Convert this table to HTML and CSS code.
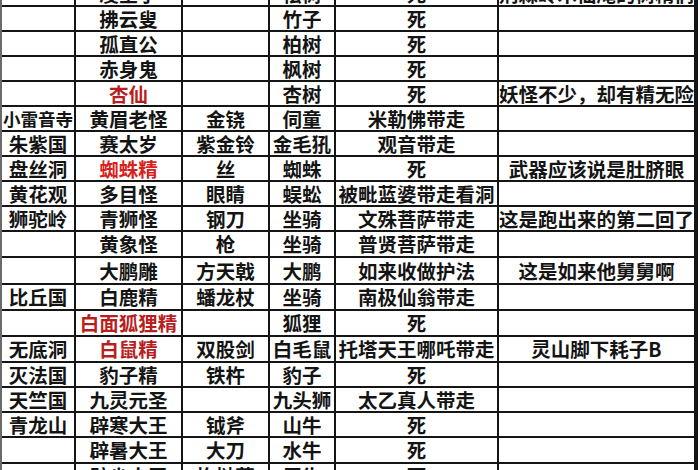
FILE: index.html
```html
<!DOCTYPE html>
<html lang="zh-CN">
<head>
<meta charset="utf-8">
<title>西游记妖怪表</title>
<link rel="stylesheet" href="styles.css">
</head>
<body>
<div class="sheet">
  <div class="c"></div><div class="c">凌空子</div><div class="c"></div><div class="c">桧树</div><div class="c">死</div><div class="c">荆棘岭木仙庵的树精们</div>
  <div class="c"></div><div class="c">拂云叟</div><div class="c"></div><div class="c">竹子</div><div class="c">死</div><div class="c"></div>
  <div class="c"></div><div class="c">孤直公</div><div class="c"></div><div class="c">柏树</div><div class="c">死</div><div class="c"></div>
  <div class="c"></div><div class="c">赤身鬼</div><div class="c"></div><div class="c">枫树</div><div class="c">死</div><div class="c"></div>
  <div class="c"></div><div class="c red dark">杏仙</div><div class="c"></div><div class="c">杏树</div><div class="c">死</div><div class="c">妖怪不少，却有精无险</div>
  <div class="c small">小雷音寺</div><div class="c">黄眉老怪</div><div class="c">金铙</div><div class="c">伺童</div><div class="c">米勒佛带走</div><div class="c"></div>
  <div class="c">朱紫国</div><div class="c">赛太岁</div><div class="c">紫金铃</div><div class="c">金毛犼</div><div class="c">观音带走</div><div class="c"></div>
  <div class="c">盘丝洞</div><div class="c red">蜘蛛精</div><div class="c">丝</div><div class="c">蜘蛛</div><div class="c">死</div><div class="c">武器应该说是肚脐眼</div>
  <div class="c">黄花观</div><div class="c">多目怪</div><div class="c">眼睛</div><div class="c">蜈蚣</div><div class="c">被毗蓝婆带走看洞</div><div class="c"></div>
  <div class="c">狮驼岭</div><div class="c">青狮怪</div><div class="c">钢刀</div><div class="c">坐骑</div><div class="c">文殊菩萨带走</div><div class="c">这是跑出来的第二回了</div>
  <div class="c"></div><div class="c">黄象怪</div><div class="c">枪</div><div class="c">坐骑</div><div class="c">普贤菩萨带走</div><div class="c"></div>
  <div class="c"></div><div class="c">大鹏雕</div><div class="c">方天戟</div><div class="c">大鹏</div><div class="c">如来收做护法</div><div class="c">这是如来他舅舅啊</div>
  <div class="c">比丘国</div><div class="c">白鹿精</div><div class="c">蟠龙杖</div><div class="c">坐骑</div><div class="c">南极仙翁带走</div><div class="c"></div>
  <div class="c"></div><div class="c red dark">白面狐狸精</div><div class="c"></div><div class="c">狐狸</div><div class="c">死</div><div class="c"></div>
  <div class="c">无底洞</div><div class="c red dark">白鼠精</div><div class="c">双股剑</div><div class="c">白毛鼠</div><div class="c">托塔天王哪吒带走</div><div class="c">灵山脚下耗子B</div>
  <div class="c">灭法国</div><div class="c">豹子精</div><div class="c">铁杵</div><div class="c">豹子</div><div class="c">死</div><div class="c"></div>
  <div class="c">天竺国</div><div class="c">九灵元圣</div><div class="c"></div><div class="c">九头狮</div><div class="c">太乙真人带走</div><div class="c"></div>
  <div class="c">青龙山</div><div class="c">辟寒大王</div><div class="c">钺斧</div><div class="c">山牛</div><div class="c">死</div><div class="c"></div>
  <div class="c"></div><div class="c">辟暑大王</div><div class="c">大刀</div><div class="c">水牛</div><div class="c">死</div><div class="c"></div>
  <div class="c"></div><div class="c">辟尘大王</div><div class="c">扢挞藤</div><div class="c">犀牛</div><div class="c">死</div><div class="c"></div>
</div>
</body>
</html>
```
FILE: styles.css
```css
html, body {
  margin: 0;
  padding: 0;
  background: #ffffff;
  overflow: hidden;
}
body {
  width: 700px;
  height: 470px;
}
.sheet {
  display: grid;
  grid-template-columns: 72px 105px 85px 64px 161px 195px;
  grid-template-rows: 23px 23px 23px 23px 23px 23px 23px 23px 23px 23px 24px 25px 24px 24px 24px 23px 23px 23px 24px 23px;
  gap: 2px;
  width: 694px;
  margin-top: -18px;
  padding: 0 2px 0 2px;
  background: #151515;
  box-shadow: inset 2px 0 0 #6a6a6a;
}
.c {
  background: #ffffff;
  display: flex;
  align-items: center;
  justify-content: center;
  white-space: nowrap;
  font-family: "Noto Sans CJK SC", "Noto Sans", sans-serif;
  font-weight: 700;
  font-size: 19.5px;
  line-height: 1;
  color: #141414;
}
.small {
  font-size: 17.5px;
}
.red {
  color: #d8201c;
}
.red.dark {
  color: #b81e1e;
}
```
